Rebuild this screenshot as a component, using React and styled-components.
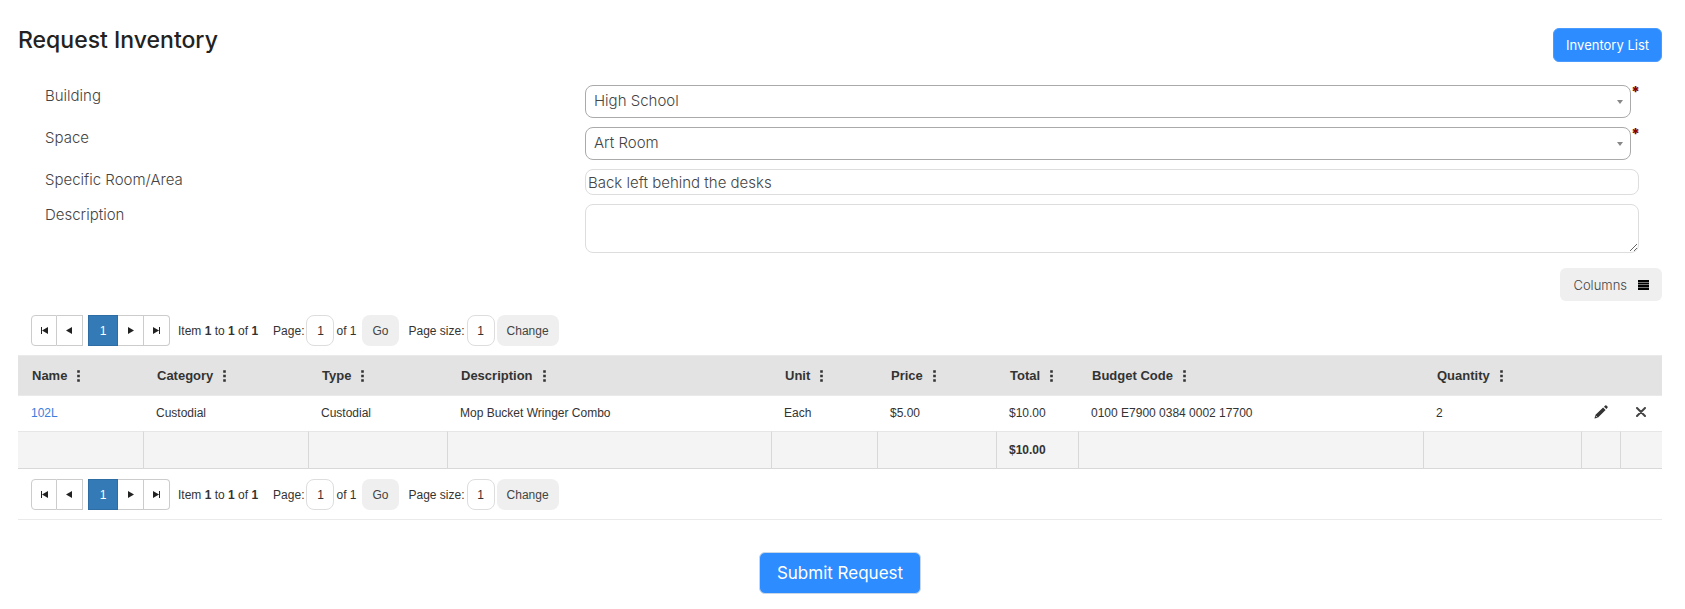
import styled, { createGlobalStyle } from 'styled-components'

const columns = [
	{ key: 'name', title: 'Name', width: 125 },
	{ key: 'category', title: 'Category', width: 165 },
	{ key: 'type', title: 'Type', width: 139 },
	{ key: 'description', title: 'Description' },
	{ key: 'unit', title: 'Unit', width: 106 },
	{ key: 'price', title: 'Price', width: 119 },
	{ key: 'total', title: 'Total', width: 82 },
	{ key: 'budget', title: 'Budget Code', width: 345 },
	{ key: 'quantity', title: 'Quantity', width: 158 },
]

const items = [
	{
		name: '102L',
		category: 'Custodial',
		type: 'Custodial',
		description: 'Mop Bucket Wringer Combo',
		unit: 'Each',
		price: '$5.00',
		total: '$10.00',
		budget: '0100 E7900 0384 0002 17700',
		quantity: '2',
	},
]

const arrows = {
	first: 'M0 0h1v7h-1z M7 0v7l-6 -3.5z',
	prev: 'M6 0v7l-6 -3.5z',
	next: 'M1 0v7l6 -3.5z',
	last: 'M0 0v7l6 -3.5z M6 0h1v7h-1z',
}

const Arrow = ({ name }) => (
	<svg width='7' height='7' viewBox='0 0 7 7' aria-hidden='true'>
		<path d={arrows[name]} fill='#222' />
	</svg>
)

const Dots = () => (
	<svg width='3' height='12' viewBox='0 0 3 12' aria-hidden='true'>
		<path
			d='M0.2 0.2h2.6v2.6h-2.6z M0.2 4.7h2.6v2.6h-2.6z M0.2 9.2h2.6v2.6h-2.6z'
			fill='#333'
		/>
	</svg>
)

const Pager = ({ id }) => (
	<PagerBar>
		<Pages>
			<PageButton aria-label='First page'>
				<Arrow name='first' />
			</PageButton>
			<PageButton aria-label='Previous page'>
				<Arrow name='prev' />
			</PageButton>
		</Pages>
		<Pages $end>
			<PageButton $active>1</PageButton>
			<PageButton aria-label='Next page'>
				<Arrow name='next' />
			</PageButton>
			<PageButton aria-label='Last page'>
				<Arrow name='last' />
			</PageButton>
		</Pages>
		<PagerInfo>
			Item <b>1</b> to <b>1</b> of <b>1</b>
		</PagerInfo>
		<PagerGroup>
			<label htmlFor={`${id}-page`}>Page:</label>
			<PagerInput id={`${id}-page`} defaultValue='1' />
			<span>of 1</span>
			<PagerButton $spaced>Go</PagerButton>
		</PagerGroup>
		<PagerGroup>
			<label htmlFor={`${id}-size`}>Page size:</label>
			<PagerInput id={`${id}-size`} defaultValue='1' />
			<PagerButton>Change</PagerButton>
		</PagerGroup>
	</PagerBar>
)

const SelectField = ({ id, value }) => (
	<SelectBox>
		<Select id={id} defaultValue={value} required>
			<option>{value}</option>
		</Select>
		<Caret width='6' height='4' viewBox='0 0 6 4' aria-hidden='true'>
			<path d='M0 0h6l-3 4z' fill='#888' />
		</Caret>
		<Required>*</Required>
	</SelectBox>
)

const App = () => {
	return (
		<>
			<GlobalStyle />
			<Page>
				<Header>
					<h1>Request Inventory</h1>
					<PrimaryButton>Inventory List</PrimaryButton>
				</Header>

				<Form>
					<label htmlFor='building'>Building</label>
					<SelectField id='building' value='High School' />
					<label htmlFor='space'>Space</label>
					<SelectField id='space' value='Art Room' />
					<label htmlFor='room'>Specific Room/Area</label>
					<TextInput id='room' defaultValue='Back left behind the desks' />
					<label htmlFor='description'>Description</label>
					<TextArea id='description' />
				</Form>

				<Toolbar>
					<ColumnsButton>
						Columns
						<svg width='11' height='10' viewBox='0 0 11 10' aria-hidden='true'>
							<path d='M0 0h11v10h-11z' fill='#777' />
							<path
								d='M0 0h11v2h-11z M0 3h11v1h-11z M0 5h11v2h-11z M0 8h11v2h-11z'
								fill='#000'
							/>
						</svg>
					</ColumnsButton>
				</Toolbar>

				<Grid>
					<Pager id='top' />
					<Table>
						<colgroup>
							{columns.map((col) => (
								<Col key={col.key} $width={col.width} />
							))}
							<Col $width={39} />
							<Col $width={42} />
						</colgroup>
						<thead>
							<tr>
								{columns.map((col) => (
									<th key={col.key}>
										<HeadCell>
											{col.title}
											<Dots />
										</HeadCell>
									</th>
								))}
								<th />
								<th />
							</tr>
						</thead>
						<tbody>
							{items.map((item) => (
								<tr key={item.name}>
									{columns.map((col) => (
										<td key={col.key}>
											{col.key === 'name' ? (
												<a href='#item'>{item.name}</a>
											) : (
												item[col.key]
											)}
										</td>
									))}
									<IconCell>
										<IconButton aria-label='Edit'>
											<svg width='14' height='14' viewBox='0 0 14 14'>
												<path
													d='M0.5 13.5l0.8 -3.4l7.8 -7.6l2.5 2.5l-7.8 7.7z M10 1.7l1.2 -1.2q0.6 -0.5 1.2 0l1.1 1.1q0.5 0.6 0 1.2l-1.1 1.2z'
													fill='#333'
												/>
												<path
													d='M1.4 10.6l2 2'
													stroke='#fff'
													strokeWidth='0.8'
												/>
											</svg>
										</IconButton>
									</IconCell>
									<IconCell>
										<IconButton aria-label='Delete'>
											<svg width='10' height='10' viewBox='0 0 10 10'>
												<path
													d='M1 1l8 8M9 1l-8 8'
													stroke='#444'
													strokeWidth='2'
													strokeLinecap='round'
												/>
											</svg>
										</IconButton>
									</IconCell>
								</tr>
							))}
						</tbody>
						<tfoot>
							<tr>
								{columns.map((col) => (
									<td key={col.key}>{col.key === 'total' && '$10.00'}</td>
								))}
								<td />
								<td />
							</tr>
						</tfoot>
					</Table>
					<Pager id='bottom' />
				</Grid>

				<Actions>
					<PrimaryButton $large>Submit Request</PrimaryButton>
				</Actions>
			</Page>
		</>
	)
}
export default App

const GlobalStyle = createGlobalStyle`
* {
	box-sizing: border-box;
}
body {
	margin: 0;
	background-color: #fff;
	color: #444;
	font-family: Inter, sans-serif;
	font-size: 15px;
	font-weight: 300;
}
button, input, select, textarea {
	font: inherit;
	color: inherit;
	margin: 0;
}
button {
	cursor: pointer;
}
`
const Page = styled.main`
	padding: 28px 23px 16px 18px;
`
const Header = styled.header`
	display: flex;
	justify-content: space-between;
	align-items: flex-start;
	h1 {
		margin: 0;
		font-size: 23px;
		line-height: 24px;
		font-weight: 500;
		color: #222;
	}
`
const PrimaryButton = styled.button`
	height: ${(props) => (props.$large ? '42px' : '34px')};
	padding: ${(props) => (props.$large ? '0 17px' : '0 12px')};
	border: 1px solid ${(props) => (props.$large ? '#c9d6e6' : '#4a9bff')};
	border-radius: 6px;
	background-color: #2d8cff;
	color: #fff;
	font-size: ${(props) => (props.$large ? '17px' : '13px')};
	font-weight: 400;
`
const Form = styled.form`
	display: grid;
	grid-template-columns: minmax(160px, 540px) 1fr;
	row-gap: 9px;
	padding: 23px 23px 0 27px;
	line-height: 22px;
`
const SelectBox = styled.div`
	position: relative;
	margin-right: 8px;
`
const Select = styled.select`
	display: block;
	width: 100%;
	height: 33px;
	padding: 0 24px 2px 8px;
	appearance: none;
	border: 1px solid #aaa;
	border-radius: 8px;
	background-color: #fff;
`
const Caret = styled.svg`
	position: absolute;
	right: 8px;
	top: 15px;
`
const Required = styled.span`
	position: absolute;
	left: 100%;
	top: 0;
	color: #8b0000;
	font-size: 15px;
	line-height: 14px;
	font-weight: 900;
`
const TextInput = styled.input`
	height: 26px;
	padding: 0 2px;
	border: 1px solid #ddd;
	border-radius: 8px;
`
const TextArea = styled.textarea`
	display: block;
	height: 49px;
	padding: 3px;
	border: 1px solid #ddd;
	border-radius: 8px;
	resize: vertical;
`
const Toolbar = styled.div`
	display: flex;
	justify-content: flex-end;
	padding: 15px 0 4px;
`
const ColumnsButton = styled.button`
	display: flex;
	align-items: center;
	gap: 11px;
	height: 33px;
	padding: 0 13px;
	border: none;
	border-radius: 6px;
	background-color: #efefef;
	font-size: 13px;
`
const Grid = styled.section`
	border-bottom: 1px solid #eaeaea;
	font-family: 'Liberation Sans', Arial, sans-serif;
	font-size: 12px;
	font-weight: 400;
	color: #333;
`
const PagerBar = styled.div`
	display: flex;
	align-items: center;
	padding: 10px 13px 9px;
`
const Pages = styled.div`
	display: flex;
	margin-right: ${(props) => (props.$end ? '8px' : '5px')};
	button + button {
		border-left: none;
	}
	button:${(props) => (props.$end ? 'last-child' : 'first-child')} {
		border-radius: ${(props) => (props.$end ? '0 4px 4px 0' : '4px 0 0 4px')};
	}
`
const PageButton = styled.button`
	display: flex;
	align-items: center;
	justify-content: center;
	width: ${(props) => (props.$active ? '30px' : '26px')};
	height: 31px;
	padding: 0;
	border: 1px solid ${(props) => (props.$active ? '#2e6da4' : '#ccc')};
	background-color: ${(props) => (props.$active ? '#337ab7' : '#fff')};
	color: ${(props) => (props.$active ? '#fff' : '#333')};
`
const PagerInfo = styled.span`
	margin-right: 15px;
`
const PagerGroup = styled.div`
	display: flex;
	align-items: center;
	gap: 2px;
	margin-right: 10px;
`
const PagerInput = styled.input`
	width: 28px;
	height: 31px;
	padding: 0;
	border: 1px solid #ddd;
	border-radius: 8px;
	text-align: center;
`
const PagerButton = styled.button`
	height: 31px;
	margin-left: ${(props) => (props.$spaced ? '4px' : '0')};
	padding: 0 10px;
	border: none;
	border-radius: 8px;
	background-color: #efefef;
	color: #444;
`
const Table = styled.table`
	width: 100%;
	table-layout: fixed;
	border-collapse: separate;
	border-spacing: 0;
	th {
		height: 41px;
		padding: 0 0 0 14px;
		border-top: 1px solid #eaeaea;
		border-bottom: 1px solid #eaeaea;
		background-color: #e3e3e3;
		font-size: 13px;
		font-weight: 700;
		text-align: left;
	}
	td {
		height: 35px;
		padding: 0 0 2px 13px;
	}
	a {
		color: #3b7ddd;
		text-decoration: none;
	}
	tfoot td {
		height: 38px;
		padding: 0 0 0 12px;
		border-top: 1px solid #e6e6e6;
		border-bottom: 1px solid #d8d8d8;
		border-left: 1px solid #d8d8d8;
		background-color: #f4f4f4;
		font-weight: 700;
	}
	tfoot td:first-child {
		border-left: none;
	}
`
const Col = styled.col`
	width: ${(props) => (props.$width ? `${props.$width}px` : 'auto')};
`
const HeadCell = styled.span`
	display: flex;
	align-items: center;
	gap: 10px;
`
const IconCell = styled.td`
	&& {
		padding: 0 0 4px;
	}
`
const IconButton = styled.button`
	display: block;
	margin: 0 auto;
	padding: 0;
	border: none;
	background: none;
	line-height: 0;
`
const Actions = styled.div`
	display: flex;
	justify-content: center;
	padding-top: 32px;
`
